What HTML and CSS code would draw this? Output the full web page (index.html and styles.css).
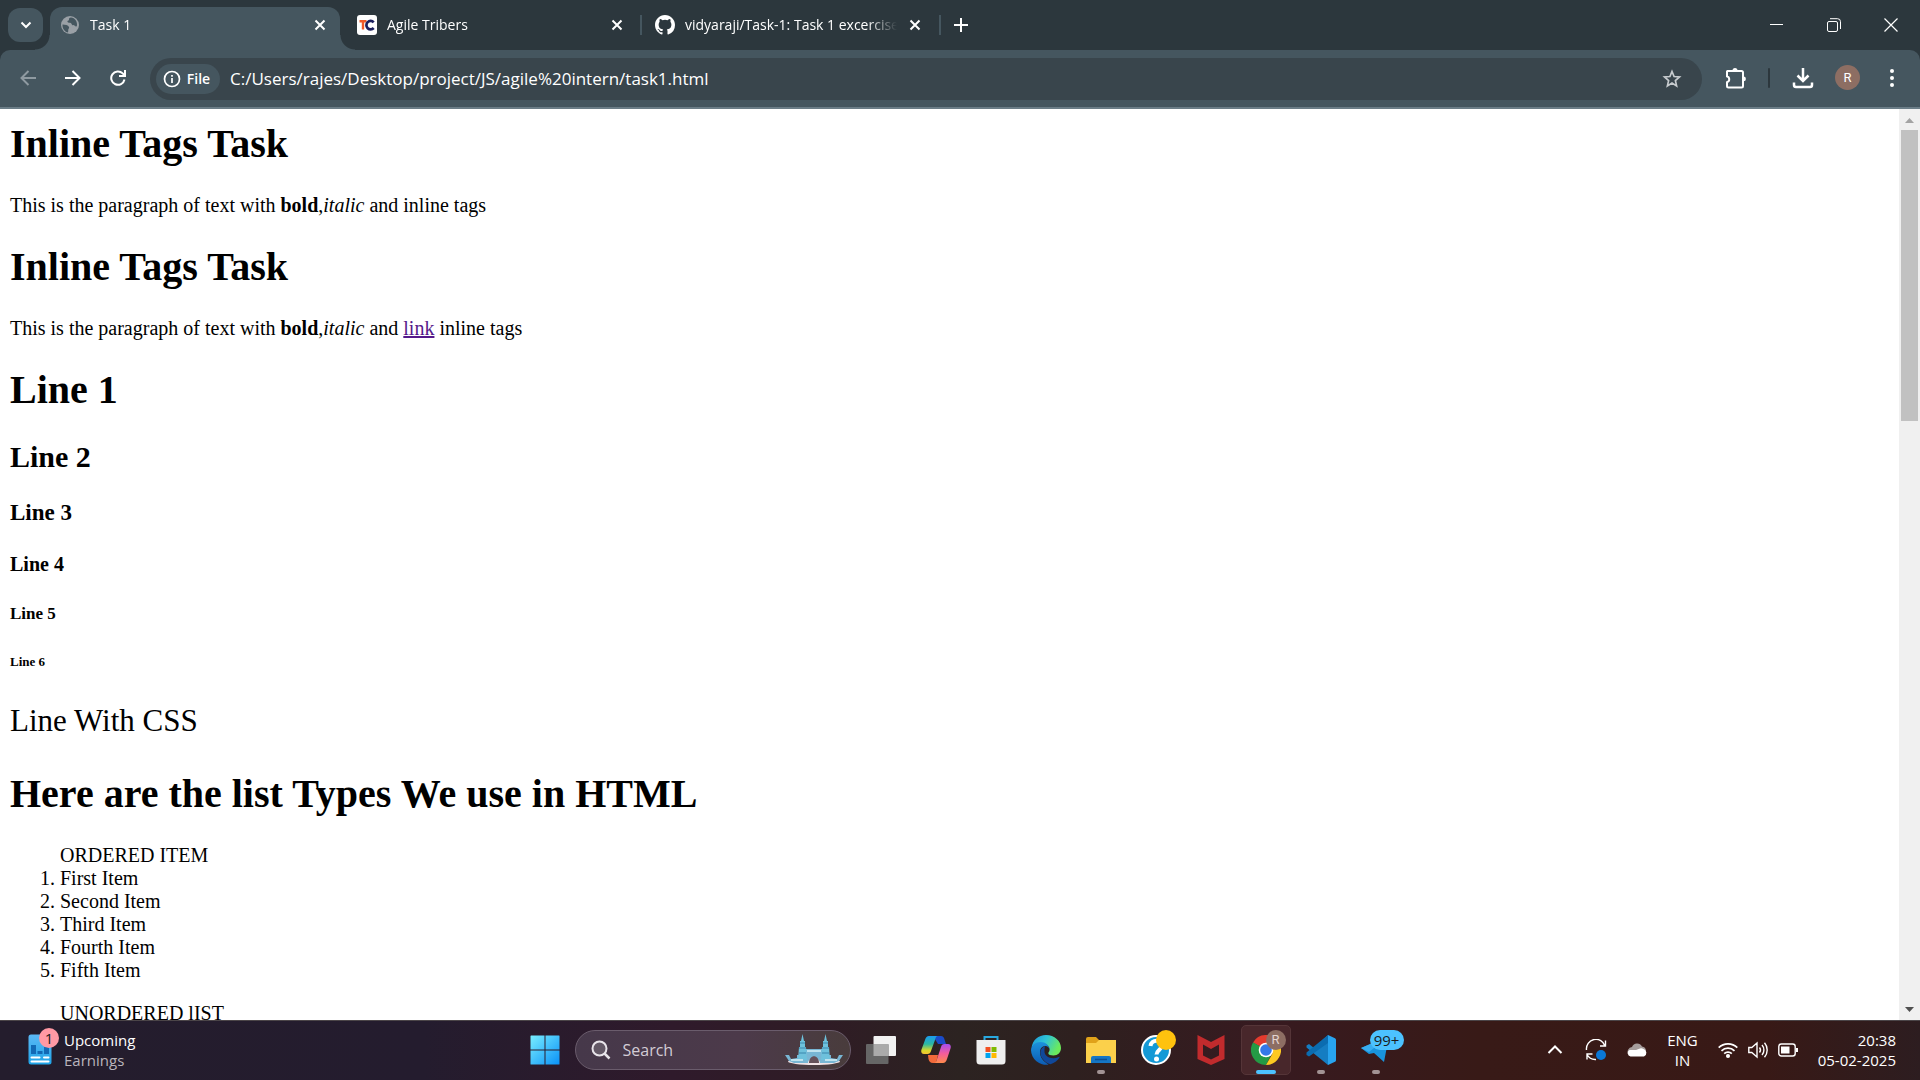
FILE: index.html
```html
<!DOCTYPE html>
<html lang="en">
<head>
<meta charset="utf-8">
<title>Task 1</title>
<link rel="stylesheet" href="styles.css">
</head>
<body>
<header class="browser">
  <div class="tabstrip">
    <button class="tab-search" aria-label="Search tabs"><svg width="16" height="16" viewBox="0 0 16 16" fill="none" stroke="#fff" stroke-width="2"><path d="M3.500 5.500 8 10l4.500-4.500"/></svg></button>
    <div class="tabs">
      <div class="tab tab-active">
        <svg class="favicon" width="20" height="20" viewBox="0 0 20 20"><circle cx="10" cy="10" r="9" fill="#9aa0a6"/><path d="M2.500 9.500c3 .3 5.500.5 6.500 2.500.5 1.300-.8 2-.8 3 0 1 .3 1.800-.7 2.400C4 16.300 2.200 13 2.500 9.500zM11 2.600c-1.600.2-2.300 1-2 2.100.2.900-1.300.7-1.600 1.600-.2 1 1.400 1.500 2.600 1.500 1.400 0 1.300 1.500 2.300 2.300 1 .8 2.900.1 3.600 1.600l1-.6c.8-4-1.900-8.300-5.900-8.500z" fill="#45565f"/></svg>
        <span class="tab-title">Task 1</span>
        <button class="tab-close" aria-label="Close tab"><svg width="12" height="12" viewBox="0 0 12 12" stroke="#fff" stroke-width="2"><path d="m1.500 1.500 9 9m0-9-9 9"/></svg></button>
      </div>
      <div class="tab">
        <svg class="favicon" width="20" height="20" viewBox="0 0 20 20"><rect width="20" height="20" rx="3" fill="#fff"/><path d="M2.500 6.200h7M6 6.500v8" stroke="#f15a29" stroke-width="2.400" fill="none"/><path d="M16.700 7.300A4.200 4.200 0 1 0 16.700 13" stroke="#1b1f5e" stroke-width="2.700" fill="none"/></svg>
        <span class="tab-title">Agile Tribers</span>
        <button class="tab-close" aria-label="Close tab"><svg width="12" height="12" viewBox="0 0 12 12" stroke="#fff" stroke-width="2"><path d="m1.500 1.500 9 9m0-9-9 9"/></svg></button>
      </div>
      <span class="tab-divider"></span>
      <div class="tab">
        <svg class="favicon" width="20" height="20" viewBox="0 0 16 16" fill="#fff"><path d="M8 0C3.580 0 0 3.580 0 8c0 3.540 2.290 6.530 5.470 7.590.4.070.55-.17.55-.38 0-.19-.01-.82-.01-1.490-2.010.37-2.530-.49-2.690-.94-.09-.23-.48-.94-.82-1.130-.28-.15-.68-.52-.01-.53.630-.01 1.080.58 1.230.82.72 1.210 1.870.87 2.330.66.070-.52.280-.87.510-1.070-1.780-.2-3.640-.89-3.640-3.950 0-.87.310-1.590.82-2.150-.08-.2-.36-1.020.08-2.120 0 0 .67-.21 2.200.82a7.600 7.600 0 0 1 4 0c1.530-1.040 2.200-.82 2.200-.82.44 1.100.16 1.920.08 2.120.51.560.82 1.270.82 2.150 0 3.070-1.870 3.750-3.650 3.950.29.25.54.73.54 1.480 0 1.070-.01 1.930-.01 2.200 0 .21.15.46.55.38A8.010 8.010 0 0 0 16 8c0-4.420-3.580-8-8-8z"/></svg>
        <span class="tab-title">vidyaraji/Task-1: Task 1 excercise</span>
        <button class="tab-close" aria-label="Close tab"><svg width="12" height="12" viewBox="0 0 12 12" stroke="#fff" stroke-width="2"><path d="m1.500 1.500 9 9m0-9-9 9"/></svg></button>
      </div>
      <span class="tab-divider"></span>
      <button class="new-tab" aria-label="New tab"><svg width="14" height="14" viewBox="0 0 14 14" stroke="#fff" stroke-width="2"><path d="M7 0v14M0 7h14"/></svg></button>
    </div>
    <div class="window-controls">
      <button aria-label="Minimize"><svg width="14" height="14" viewBox="0 0 14 14" stroke="#fff"><path d="M0 6.500h13"/></svg></button>
      <button aria-label="Restore"><svg width="14" height="14" viewBox="0 0 14 14" fill="none" stroke="#fff"><rect x=".5" y="3.500" width="10" height="10" rx="1.500"/><path d="M3 .7h7.500a3 3 0 0 1 3 3V11"/></svg></button>
      <button aria-label="Close"><svg width="14" height="14" viewBox="0 0 14 14" stroke="#fff" stroke-width="1.200"><path d="m.5.5 13 13m0-13-13 13"/></svg></button>
    </div>
  </div>
  <div class="toolbar">
    <button class="nav-button" aria-label="Back"><svg width="16" height="16" viewBox="0 0 16 16" fill="none" stroke="#8f9aa1" stroke-width="2"><path d="M16 8H2M8.500 1 1.500 8l7 7"/></svg></button>
    <button class="nav-button" aria-label="Forward"><svg width="16" height="16" viewBox="0 0 16 16" fill="none" stroke="#fff" stroke-width="2"><path d="M0 8h14M7.500 1l7 7-7 7"/></svg></button>
    <button class="nav-button" aria-label="Reload"><svg width="16" height="16" viewBox="0 0 16 16" fill="none" stroke="#fff" stroke-width="2"><path d="M14.500 9.500A6.700 6.700 0 1 1 12.700 3.400L14.500 5.300"/><path d="M15 0v6H9"/></svg></button>
    <div class="omnibox">
      <button class="site-chip"><svg width="18" height="18" viewBox="0 0 18 18" fill="none" stroke="#fff" stroke-width="1.700"><circle cx="9" cy="9" r="7.500"/><path d="M9 8v5M9 5v1.700"/></svg>File</button>
      <input class="url" type="text" aria-label="Address" value="C:/Users/rajes/Desktop/project/JS/agile%20intern/task1.html">
      <button class="star" aria-label="Bookmark"><svg width="20" height="20" viewBox="0 0 20 20" fill="none" stroke="#c7cbce" stroke-width="1.700"><path d="m10 2.500 2.100 5 5.400.5-4.100 3.600 1.200 5.300L10 14.100l-4.600 2.800 1.200-5.300L2.500 8l5.400-.5z"/></svg></button>
    </div>
    <div class="actions">
      <button aria-label="Extensions"><svg width="22" height="22" viewBox="0 0 22 22"><path d="M2.500 4h14a1.500 1.500 0 0 1 1.500 1.500v13.500a1.500 1.500 0 0 1-1.500 1.500h-13A1.500 1.500 0 0 1 2 19v-3.800a3 3 0 0 0 0-5.800V4.500z" fill="none" stroke="#fff" stroke-width="2"/><path d="M7.500 3.500a2.500 2.500 0 0 1 5 0zM18.500 9.500a2.400 2.400 0 0 1 0 4.800z" fill="#fff"/></svg></button>
      <span class="action-divider"></span>
      <button aria-label="Downloads"><svg width="22" height="22" viewBox="0 0 22 22" fill="none" stroke="#fff" stroke-width="2.500"><path d="M11 1v12M5.500 8.500 11 14l5.500-5.500M2 15.500V18a2 2 0 0 0 2 2h14a2 2 0 0 0 2-2v-2.500"/></svg></button>
      <button class="profile" aria-label="Profile">R</button>
      <button aria-label="Menu"><svg width="22" height="22" viewBox="0 0 22 22" fill="#fff"><circle cx="11" cy="4" r="2"/><circle cx="11" cy="11" r="2"/><circle cx="11" cy="18" r="2"/></svg></button>
    </div>
  </div>
</header>

<div class="viewport">
  <main class="page">
    <h1>Inline Tags Task</h1>
    <p>This is the paragraph of text with <b>bold</b>,<i>italic</i> and inline tags</p>
    <h1>Inline Tags Task</h1>
    <p>This is the paragraph of text with <b>bold</b>,<i>italic</i> and <a href="#">link</a> inline tags</p>
    <h1>Line 1</h1>
    <h2>Line 2</h2>
    <h3>Line 3</h3>
    <h4>Line 4</h4>
    <h5>Line 5</h5>
    <h6>Line 6</h6>
    <p class="styled-line">Line With CSS</p>
    <h1>Here are the list Types We use in HTML</h1>
    <div class="list-block">
      <div>ORDERED ITEM</div>
      <ol>
        <li>First Item</li>
        <li>Second Item</li>
        <li>Third Item</li>
        <li>Fourth Item</li>
        <li>Fifth Item</li>
      </ol>
    </div>
    <div class="list-block">UNORDERED lIST</div>
  </main>
  <div class="scrollbar">
    <svg width="21" height="21" viewBox="0 0 21 21" fill="#a3a3a3"><path d="M6 14h9l-4.500-5z"/></svg>
    <div class="scroll-track"><div class="scroll-thumb"></div></div>
    <svg width="21" height="21" viewBox="0 0 21 21" fill="#505050"><path d="M6 8h9l-4.500 5z"/></svg>
  </div>
</div>

<footer class="taskbar">
  <button class="widget">
    <span class="widget-icon">
      <svg width="24" height="31" viewBox="0 0 24 31"><defs><linearGradient id="wg" x1="0" y1="0" x2="0" y2="1"><stop offset="0" stop-color="#5bb8f5"/><stop offset="1" stop-color="#1fa4e8"/></linearGradient></defs><rect x=".5" y=".5" width="23" height="30" rx="2.500" fill="url(#wg)"/><path d="M3 11h5v9H3zM9.500 17h5v3h-5zM16 13h5v7h-5z" fill="#1269b5"/><path d="M3.500 23.500h8M16 23.500h4.500M3.500 27.500h17" stroke="#fff" stroke-width="2" stroke-linecap="round"/></svg>
      <span class="badge badge-pink">1</span>
    </span>
    <span class="widget-text"><span>Upcoming</span><span class="muted">Earnings</span></span>
  </button>

  <div class="apps">
    <button class="app" aria-label="Start"><svg width="30" height="30" viewBox="0 0 30 30"><defs><linearGradient id="st" x1="0" y1="0" x2="1" y2="1"><stop offset="0" stop-color="#79eeff"/><stop offset="1" stop-color="#0a91f7"/></linearGradient></defs><path d="M1 .5h13.500v14H.5V1zM15.500.5H29a.5.5 0 0 1 .5.5v13.500h-14zM.5 15.500h14v14H1a.5.5 0 0 1-.5-.5zM15.500 15.500h14V29a.5.5 0 0 1-.5.5H15.500z" fill="url(#st)"/></svg></button>
    <label class="search">
      <svg width="20" height="20" viewBox="0 0 20 20" fill="none" stroke="#e8e4ea" stroke-width="2"><circle cx="8.500" cy="8.500" r="7" fill="#635866"/><path d="m13.500 13.500 5 5" stroke-width="2.500"/></svg>
      <input type="text" placeholder="Search" aria-label="Search">
      <svg width="58" height="32" viewBox="0 0 58 32"><ellipse cx="29" cy="27.500" rx="26" ry="3.500" fill="#f0e2e5"/><path d="M0 21h4l2 4 6-1v-3h3v3h4v-9h20v9h4v-3h3v3l6 1 2-4h4l-4 6-5 2H35a6 5 0 0 0-12 0H9l-5-2z" fill="#78b6d4"/><path d="M17.500 0 19 7h1v6h1l1 13h-9l1-13h1V7h1zM40.500 0 42 7h1v6h1l1 13h-9l1-13h1V7h1z" fill="#6ec1dc"/><path d="M15 9h5m-6 5h7m-7 5h7M38 9h5m-6 5h7m-7 5h7" stroke="#3b86ad"/><path d="M22 17h14M6 26h12m22 0h12" stroke="#bfe3ef" stroke-width="2"/><path d="M24 29c0-9 10-9 10 0z" fill="#65515a"/></svg>
    </label>
    <button class="app" aria-label="Task view"><svg width="30" height="30" viewBox="0 0 30 30"><rect x="7.500" y="1" width="22.500" height="20" rx="1" fill="#f2f2f2"/><rect y="9" width="22.500" height="20" rx="1" fill="#666"/><path d="M7.500 9h15v12h-15z" fill="#aaa"/></svg></button>
    <button class="app" aria-label="Copilot"><svg width="30" height="30" viewBox="0 0 30 30"><defs><linearGradient id="c1" x1="0" y1="0" x2="0" y2="1"><stop offset="0" stop-color="#1b9bf0"/><stop offset=".45" stop-color="#2bb8a0"/><stop offset=".8" stop-color="#d8d82a"/><stop offset="1" stop-color="#f7c331"/></linearGradient><linearGradient id="c2" x1="0" y1="0" x2="0" y2="1"><stop offset="0" stop-color="#a44df0"/><stop offset=".5" stop-color="#f45c9c"/><stop offset="1" stop-color="#ff8a4a"/></linearGradient></defs><path d="M12 1h8c2 0 3 1.500 3.500 3.500L25 9h-8z" fill="#1a4bc9"/><path d="M7 20h10l-2 8h-3c-3 0-4-2-4.500-4z" fill="#f26a3b"/><path d="M8 1h9c-2 0-2.500 2-3 4l-4 11c-.5 2-1.500 3-3.500 3H3c-2.500 0-3.300-2-2.500-4.500L4 5c.8-2.500 2-4 4-4z" fill="url(#c1)"/><path d="M22 28h-9c2 0 2.500-2 3-4l4-12c.5-2 1.500-3 3.500-3H27c2.500 0 3.300 2 2.500 4.500L26 24c-.8 2.500-2 4-4 4z" fill="url(#c2)"/></svg></button>
    <button class="app" aria-label="Store"><svg width="30" height="30" viewBox="0 0 30 30"><path d="M8.500 5V2h13v3" fill="none" stroke="#29a9e0" stroke-width="2"/><path d="M.5 5h29v21a3.500 3.500 0 0 1-3.500 3.500H4A3.500 3.500 0 0 1 .5 26z" fill="#efefef"/><path d="M9.500 12h5v5h-5z" fill="#f25022"/><path d="M15.500 12h5v5h-5z" fill="#7fba00"/><path d="M9.500 18h5v5h-5z" fill="#00a4ef"/><path d="M15.500 18h5v5h-5z" fill="#ffb900"/></svg></button>
    <button class="app" aria-label="Edge"><svg width="30" height="30" viewBox="0 0 30 30"><defs><linearGradient id="e1" x1="0" y1="0" x2="1" y2=".4"><stop offset="0" stop-color="#1b94dc"/><stop offset=".5" stop-color="#2fc4d6"/><stop offset="1" stop-color="#6bea5c"/></linearGradient><linearGradient id="e2" x1="0" y1="0" x2="0" y2="1"><stop offset="0" stop-color="#1c92dc"/><stop offset="1" stop-color="#0c5cb4"/></linearGradient></defs><path d="M.5 13C1.500 5 7.500 0 15 0c8.500 0 15 6 15 13 0 4.500-3.200 7.500-7.500 7.500-3 0-5.200-1-5.200-2.300 0-.9 1.300-1.300 1.300-3.600C18.600 10 14 8 9.500 8 5 8 1.500 10.500.5 13z" fill="url(#e1)"/><path d="M0 15c.3-5 4.500-8 9.500-8 5 0 9 3.500 9 7.600 0-2-2-3.600-4.200-3.600C10 11 9 15 9 17.500c0 5 3.500 9 8.500 12A15 15 0 0 1 0 15z" fill="url(#e2)"/><path d="M14 11.200C9 13 8 18 11 23c2 3.500 5.500 5.500 8.500 6.200 4-1 7.500-4 9-6.700.3-.6-.2-.8-.7-.5C21 25 14 22 13.500 17c-.2-2 0-4 .5-5.800z" fill="#10489a"/></svg></button>
    <button class="app app-running" aria-label="File Explorer"><svg width="30" height="30" viewBox="0 0 30 30"><path d="M0 4a2 2 0 0 1 2-2h8l3 3v6H0z" fill="#e0a21a"/><path d="M0 8h10l3-3h17v23H0z" fill="#fbd04b"/><path d="M5 28v-5a2 2 0 0 1 2-2h16a2 2 0 0 1 2 2v5z" fill="#1576c4"/><path d="M9 24.500h12" stroke="#0c4f92" stroke-width="1.500"/></svg></button>
    <button class="app" aria-label="Help"><svg width="30" height="30" viewBox="0 0 30 30"><circle cx="15" cy="15" r="14" fill="#1499d6" stroke="#fff" stroke-width="2"/><path d="M9.500 11c.5-7 11.500-7 11.500-.5 0 4-5.500 4.500-5.500 9" fill="none" stroke="#fff" stroke-width="4"/><circle cx="15.500" cy="24" r="2.500" fill="#fff"/></svg><span class="badge badge-yellow"></span></button>
    <button class="app" aria-label="McAfee"><svg width="30" height="30" viewBox="0 0 30 30"><path d="m1.500 0 13.500 7L28.500 0v24L15 30 1.500 24zM7 9.500v11l8 4 8-4v-11l-8 4.500z" fill="#c12b2d" fill-rule="evenodd"/></svg></button>
    <button class="app app-running app-active" aria-label="Chrome"><svg width="30" height="30" viewBox="0 0 30 30"><path d="M15 15 2 7.500A15 15 0 0 1 28 7.500z" fill="#e33b2e"/><path d="M15 15 15 30A15 15 0 0 1 2 7.500z" fill="#249a45"/><path d="m2 7.500 6.500 11L15 30l6-12z" fill="#249a45"/><path d="M15 7.500h13A15 15 0 0 1 15 30l6.500-11.500z" fill="#fdc921"/><circle cx="15" cy="15" r="7.300" fill="#fff"/><circle cx="15" cy="15" r="5.800" fill="#3478e8"/></svg><span class="badge badge-profile">R</span></button>
    <button class="app app-running" aria-label="Visual Studio Code"><svg width="30" height="30" viewBox="0 0 30 30"><path d="M22 0 8 13 3 9 .5 10.500v2L22 30l1-7z" fill="#157dc2"/><path d="M22 0v8L3 21.500.5 20v-2.500z" fill="#0b6cb0"/><path d="m22 0 7 3.200a2 2 0 0 1 1 1.800v20a2 2 0 0 1-1 1.800L22 30z" fill="#28a4ef"/></svg></button>
    <button class="app app-running" aria-label="Messages"><svg width="30" height="30" viewBox="0 0 30 30"><path d="M0 13 28 1l-5 26-10-9-5 1z" fill="#1994dc"/><path d="M0 13 28 1 8 17z" fill="#38adf0"/></svg><span class="badge badge-count">99+</span></button>
  </div>

  <div class="tray">
    <button aria-label="Show hidden icons"><svg width="20" height="20" viewBox="0 0 20 20" fill="none" stroke="#fff" stroke-width="2"><path d="m3.500 13 6.500-6.500 6.500 6.500"/></svg></button>
    <button aria-label="Sync"><svg width="22" height="22" viewBox="0 0 22 22" fill="none" stroke="#fff" stroke-width="1.400"><path d="M1.500 11A9.500 9.500 0 0 1 20 7M20.500 1.500V7H15M2 20.500V15h5.500M2 15.500a9.500 9.500 0 0 0 9 5"/><circle cx="16" cy="16" r="5" fill="#0a78d7" stroke="none"/></svg></button>
    <button aria-label="OneDrive"><svg width="20" height="20" viewBox="0 0 20 20"><path d="M1 14a5 5 0 0 1 4-7 5.500 5.500 0 0 1 10-.5 4.500 4.500 0 0 1 4 4z" fill="#a69d9c"/><path d="M3.500 16.500a3.500 3.500 0 0 1-1-6.500L9 10l4-1.500a5 5 0 0 1 3.500.500 4 4 0 0 1 .5 7.500z" fill="#fff"/></svg></button>
    <button class="tray-text language">ENG<br>IN</button>
    <button class="status" aria-label="Network, volume, battery">
      <svg width="20" height="20" viewBox="0 0 20 20" fill="none" stroke="#fff" stroke-width="1.700"><path d="M.7 7.700a13 13 0 0 1 18.600 0M3.500 10.800a9.200 9.200 0 0 1 13 0M6.200 13.700a5.400 5.400 0 0 1 7.600 0"/><circle cx="10" cy="16" r="1.200" fill="#fff"/></svg>
      <svg width="20" height="20" viewBox="0 0 20 20" fill="none" stroke="#fff" stroke-width="1.400"><path d="M.8 7.500h3L9 3v14l-5.200-4.500h-3zM11.500 7.500a4 4 0 0 1 0 5M14 5a7.500 7.500 0 0 1 0 10M16.500 2.800a11 11 0 0 1 0 14.400"/></svg>
      <svg width="20" height="20" viewBox="0 0 20 20" fill="none" stroke="#fff" stroke-width="1.400"><rect x=".8" y="4" width="16.400" height="12" rx="2.500"/><path d="M3 6.500h8.500v7H3z" fill="#fff" stroke="none"/><path d="M19 8v4" stroke-width="2"/></svg>
    </button>
    <button class="tray-text clock">20:38<br>05-02-2025</button>
  </div>
</footer>
</body>
</html>
```

FILE: styles.css
```css
* {
  box-sizing: border-box;
}

body {
  margin: 0;
  height: 100vh;
  display: flex;
  flex-direction: column;
  overflow: hidden;
  font-family: "Open Sans", "Noto Sans", sans-serif;
  color: #fff;
}

button {
  display: flex;
  align-items: center;
  justify-content: center;
  margin: 0;
  padding: 0;
  border: 0;
  background: none;
  color: inherit;
  font: inherit;
}

input {
  min-width: 0;
  padding: 0;
  border: 0;
  outline: 0;
  background: none;
  color: inherit;
  font: inherit;
}

svg {
  display: block;
  flex: none;
}

/* Browser frame */

.browser {
  flex: none;
  background: #2c373d;
}

.tabstrip {
  display: flex;
  height: 50px;
  padding-left: 8px;
}

.tab-search {
  width: 35px;
  height: 34px;
  margin: 8px 7px 0 0;
  border-radius: 12px;
  background: #45565f;
}

.tabs {
  flex: 1;
  display: flex;
  align-items: center;
  padding-top: 7px;
  min-width: 0;
}

.tab {
  position: relative;
  display: flex;
  align-items: center;
  width: 290px;
  height: 43px;
  padding: 0 10px 8px;
  font-size: 14px;
}

.tab + .tab-divider + .tab {
  width: 297px;
  padding: 0 14px 8px 13px;
}

.tab-active {
  border-radius: 12px 12px 0 0;
  background: #45565f;
}

.tab-active::before,
.tab-active::after {
  content: "";
  position: absolute;
  bottom: 0;
  width: 15px;
  height: 15px;
}

.tab-active::before {
  right: 100%;
  background: radial-gradient(circle at 0 0, transparent 14px, #45565f 15px);
}

.tab-active::after {
  left: 100%;
  background: radial-gradient(circle at 100% 0, transparent 14px, #45565f 15px);
}

.tab-active + .tab {
  width: 300px;
  padding: 0 13px 8px 17px;
}

.favicon {
  margin-right: 10px;
}

.tab-title {
  flex: 1;
  overflow: hidden;
  white-space: nowrap;
  line-height: 22px;
  -webkit-mask-image: linear-gradient(to right, #000 calc(100% - 30px), transparent);
  mask-image: linear-gradient(to right, #000 calc(100% - 30px), transparent);
}

.tab-close {
  width: 20px;
  height: 20px;
  margin-left: 8px;
}

.tab-divider {
  width: 2px;
  height: 20px;
  margin-bottom: 8px;
  background: #45565f;
}

.new-tab {
  width: 40px;
  height: 34px;
  margin-bottom: 8px;
}

.window-controls {
  display: flex;
  padding: 0 1px 1px 0;
}

.window-controls button {
  width: 57px;
}

.toolbar {
  display: flex;
  align-items: center;
  height: 59px;
  padding: 0 17px 2px 5px;
  border-bottom: 2px solid #6b7d87;
  border-radius: 10px 10px 0 0;
  background: #45565f;
}

.nav-button {
  width: 45px;
  height: 40px;
}

.omnibox {
  flex: 1;
  display: flex;
  align-items: center;
  height: 42px;
  margin: 2px 0 0 10px;
  padding: 0 20px 0 6px;
  border-radius: 21px;
  background: #39454c;
}

.site-chip {
  gap: 6px;
  width: 64px;
  height: 30px;
  padding-right: 3px;
  border-radius: 15px;
  background: #45565f;
  font-size: 14px;
  font-weight: 600;
}

.url {
  flex: 1;
  margin-left: 10px;
  font-size: 17px;
  line-height: 24px;
}

.actions {
  display: flex;
  align-items: center;
  padding-left: 23px;
}

.actions button {
  width: 22px;
  height: 30px;
}

.action-divider {
  width: 2px;
  height: 20px;
  margin: 0 22px 0 21px;
  border-radius: 1px;
  background: #2c373d;
}

.actions .profile {
  width: 25px;
  height: 25px;
  margin: 0 21px;
  border-radius: 50%;
  background: #8d6e63;
  font-family: Roboto, sans-serif;
  font-size: 13px;
}

/* Document */

.viewport {
  flex: 1;
  display: flex;
  min-height: 0;
  overflow: hidden;
  background: #fff;
}

.page {
  flex: 1;
  padding: 12px 10px;
  color: #000;
  font-family: "Liberation Serif", "Times New Roman", serif;
  font-size: 20px;
  line-height: 23px;
}

.page > :first-child {
  margin-top: 0;
}

.page p {
  margin: 20px 0;
}

.page a {
  color: #551a8b;
}

.page h1 {
  margin: 27px 0;
  font-size: 40px;
  line-height: 46px;
}

.page h2 {
  margin: 25px 0;
  font-size: 30px;
  line-height: 34px;
}

.page h3 {
  margin: 23px 0;
  font-size: 23px;
  line-height: 27px;
}

.page h4 {
  margin: 27px 0;
  font-size: 20px;
}

.page h5 {
  margin: 28px 0;
  font-size: 17px;
  line-height: 19px;
}

.page h6 {
  margin: 31px 0;
  font-size: 13px;
  line-height: 16px;
}

.page .styled-line {
  margin: 32px 0;
  font-size: 31px;
  line-height: 37px;
}

.list-block {
  margin: 20px 0;
  padding-left: 50px;
}

.list-block ol {
  margin: 0;
  padding: 0;
}

.scrollbar {
  flex: none;
  display: flex;
  flex-direction: column;
  width: 21px;
  background: #f0f0f0;
}

.scroll-track {
  flex: 1;
  padding: 0 2px;
}

.scroll-thumb {
  height: 33.5%;
  background: #c1c1c1;
}

/* Taskbar */

.taskbar {
  flex: none;
  display: grid;
  grid-template-columns: 1fr auto 1fr;
  align-items: center;
  height: 60px;
  padding: 0 24px 2px;
  border-top: 1px solid #4b4548;
  background: linear-gradient(to right, #241d2d 0%, #241c2e 22%, #2f1a2b 35%, #2f1c25 43%, #2c2321 50%, #2e201f 56%, #371a20 66%, #381a17 77%, #381916 92%, #2d1d20 100%);
  font-size: 15px;
  line-height: 20px;
}

.widget {
  justify-self: start;
  gap: 12px;
  padding-left: 4px;
}

.widget-icon {
  position: relative;
}

.widget-text {
  display: flex;
  flex-direction: column;
  text-align: left;
}

.muted {
  color: #b9b5bc;
}

.badge {
  position: absolute;
  height: 20px;
  min-width: 20px;
  border-radius: 10px;
  text-align: center;
  color: #1b1b1b;
}

.badge-pink {
  top: -6px;
  left: 11px;
  background: #ff99a4;
}

.badge-yellow {
  top: 4px;
  right: 4px;
  background: #ffc20e;
}

.badge-profile {
  top: 4px;
  right: 4px;
  background: #8d6e63;
  color: #e3d5d0;
  font-family: Roboto, sans-serif;
  font-size: 13px;
}

.badge-count {
  top: 4px;
  left: 18px;
  width: 34px;
  background: #4cc2ff;
}

.apps {
  display: flex;
  align-items: center;
  gap: 5px;
}

.app {
  position: relative;
  width: 50px;
  height: 50px;
  border: 1px solid transparent;
  border-radius: 5px;
}

.app-active {
  border-color: #553538;
  background: #48272b;
}

.app-running::after {
  content: "";
  position: absolute;
  bottom: 0;
  left: 20px;
  width: 8px;
  height: 4px;
  border-radius: 2px;
  background: #a29394;
}

.app-active::after {
  left: 14px;
  width: 20px;
  background: #4cc2ff;
}

.search {
  display: flex;
  align-items: center;
  gap: 12px;
  width: 276px;
  height: 40px;
  padding: 0 7px 0 15px;
  border: 1px solid #6a5c6c;
  border-radius: 20px;
  background: linear-gradient(to right, #46384a, #4c3a4a 60%, #493c3c);
}

.search input {
  flex: 1;
  font-size: 16px;
}

.search input::placeholder {
  color: #d3ccd5;
  opacity: 1;
}

.tray {
  justify-self: end;
  display: flex;
  align-items: center;
  gap: 20px;
}

.tray-text {
  white-space: nowrap;
}

.language {
  text-align: center;
}

.status {
  gap: 10px;
}

.clock {
  text-align: right;
}
```
